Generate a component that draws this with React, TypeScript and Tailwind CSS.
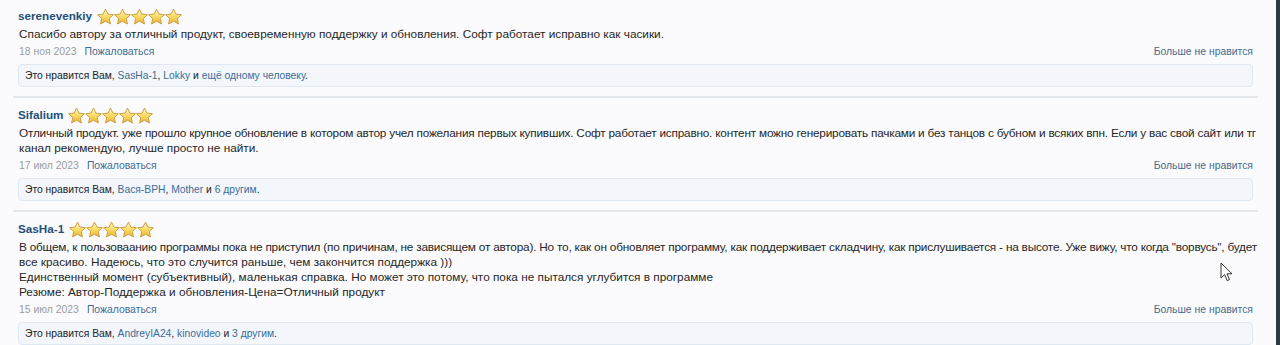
import React from 'react';

type Like = { text: string; link?: boolean };

interface Review {
  user: string;
  lines: { text: string; tight?: boolean }[];
  date: string;
  likes: Like[];
}

const REVIEWS: Review[] = [
  {
    user: 'serenevenkiy',
    lines: [{ text: 'Спасибо автору за отличный продукт, своевременную поддержку и обновления. Софт работает исправно как часики.' }],
    date: '18 ноя 2023',
    likes: [
      { text: 'Это нравится Вам, ' },
      { text: 'SasHa-1', link: true },
      { text: ', ' },
      { text: 'Lokky', link: true },
      { text: ' и ' },
      { text: 'ещё одному человеку', link: true },
      { text: '.' },
    ],
  },
  {
    user: 'Sifalium',
    lines: [
      {
        text: 'Отличный продукт. уже прошло крупное обновление в котором автор учел пожелания первых купивших. Софт работает исправно. контент можно генерировать пачками и без танцов с бубном и всяких впн. Если у вас свой сайт или тг',
        tight: true,
      },
      { text: 'канал рекомендую, лучше просто не найти.' },
    ],
    date: '17 июл 2023',
    likes: [
      { text: 'Это нравится Вам, ' },
      { text: 'Вася-ВРН', link: true },
      { text: ', ' },
      { text: 'Mother', link: true },
      { text: ' и ' },
      { text: '6 другим', link: true },
      { text: '.' },
    ],
  },
  {
    user: 'SasHa-1',
    lines: [
      {
        text: 'В общем, к пользоваанию программы пока не приступил (по причинам, не зависящем от автора). Но то, как он обновляет программу, как поддерживает складчину, как прислушивается - на высоте. Уже вижу, что когда "ворвусь", будет',
        tight: true,
      },
      { text: 'все красиво. Надеюсь, что это случится раньше, чем закончится поддержка )))' },
      { text: 'Единственный момент (субъективный), маленькая справка. Но может это потому, что пока не пытался углубится в программе' },
      { text: 'Резюме: Автор-Поддержка и обновления-Цена=Отличный продукт' },
    ],
    date: '15 июл 2023',
    likes: [
      { text: 'Это нравится Вам, ' },
      { text: 'AndreyIA24', link: true },
      { text: ', ' },
      { text: 'kinovideo', link: true },
      { text: ' и ' },
      { text: '3 другим', link: true },
      { text: '.' },
    ],
  },
];

const Star = () => (
  <svg width="17" height="17" viewBox="1 1 22 21">
    <defs>
      <linearGradient id="sg" x1="0" y1="0" x2="0" y2="1">
        <stop offset="0" stopColor="#fff8cf" />
        <stop offset="0.5" stopColor="#f9dc66" />
        <stop offset="1" stopColor="#e9b132" />
      </linearGradient>
    </defs>
    <path
      d="M12 1.8l3.1 6.6 7.2.8-5.4 4.9 1.5 7.1L12 17.6l-6.4 3.6 1.5-7.1-5.4-4.9 7.2-.8z"
      fill="url(#sg)"
      stroke="#c89c3c"
      strokeWidth="1.2"
      strokeLinejoin="round"
    />
  </svg>
);

const ReviewItem = ({ r, first }: { r: Review; first: boolean }) => (
  <div className={`px-[5px] pb-[9px] ${first ? 'pt-[5px]' : 'pt-[6px] border-t-2 border-[#e3e6ea]'}`}>
    <div className="flex items-center gap-[5px] h-[22px]">
      <span className="text-[11.7px] font-bold text-[#24507a]">{r.user}</span>
      <div className="flex">
        {[0, 1, 2, 3, 4].map((i) => (
          <Star key={i} />
        ))}
      </div>
    </div>
    <div className="text-[11.8px] leading-[15px] text-[#262626] pl-[1px]">
      {r.lines.map((l, i) => (
        <div key={i} className={`whitespace-nowrap ${l.tight ? 'tracking-[-0.21px]' : ''}`}>
          {l.text}
        </div>
      ))}
    </div>
    <div className="flex justify-between items-center text-[10.4px] leading-[15px] mt-[2px] pl-[1px]">
      <div>
        <span className="text-[#9b9b9b]">{r.date}</span>
        <span className="ml-[8px] text-[#3b6b98]">Пожаловаться</span>
      </div>
      <span className="text-[#466a8c]">Больше не нравится</span>
    </div>
    <div className="mt-[5px] h-[23px] flex items-center px-[6px] bg-[#f3f7fc] border border-[#dfe8f1] rounded-[4px] text-[10.3px] text-[#222]">
      <span>
        {r.likes.map((p, i) => (
          <span key={i} className={p.link ? 'text-[#3b6b98]' : ''}>
            {p.text}
          </span>
        ))}
      </span>
    </div>
  </div>
);

export default function App() {
  return (
    <div
      className="relative flex w-[1280px] h-[345px] overflow-hidden bg-[#fbfbfd]"
      style={{ fontFamily: '"Liberation Sans", Arial, sans-serif' }}
    >
      <div className="flex-1 min-w-0 pl-[13px] pr-[18px]">
        {REVIEWS.map((r, i) => (
          <ReviewItem key={r.user} r={r} first={i === 0} />
        ))}
      </div>
      <div className="w-[4px] bg-[#2c3a42]" />
      <svg className="absolute left-[1220px] top-[262px]" width="13" height="20" viewBox="0 0 13 20">
        <path d="M1 1v15l3.6-3.4 2.6 6 2.3-1-2.5-5.8H12z" fill="#fff" stroke="#333" strokeWidth="1" strokeLinejoin="round" />
      </svg>
    </div>
  );
}
